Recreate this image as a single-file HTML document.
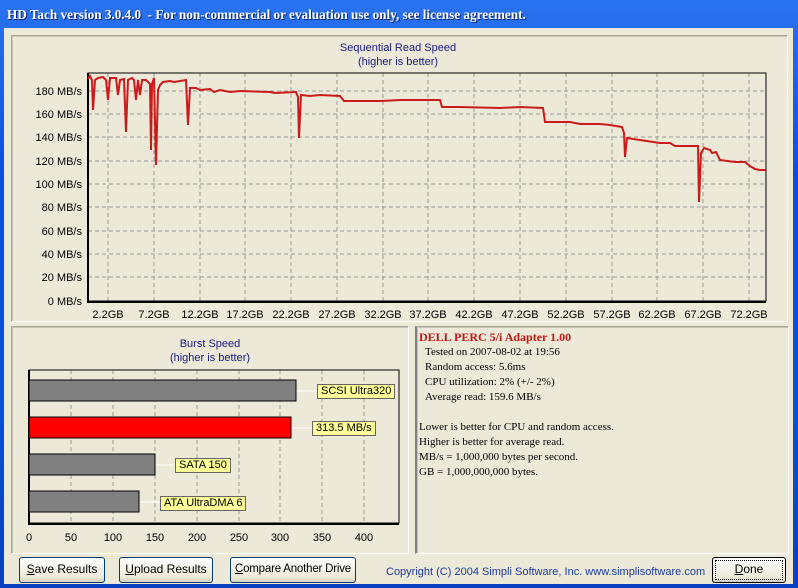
<!DOCTYPE html>
<html><head><style>
html,body{margin:0;width:798px;height:588px;overflow:hidden}
body{background:#0a3fd0;font-family:"Liberation Sans",sans-serif;position:relative}
.win{position:absolute;left:0;top:0;width:798px;height:588px;background:linear-gradient(#2a73f0,#0a4ee0 30%,#0650d8 70%,#0a3fc0);}
.title{position:absolute;left:7px;top:7px;color:#fff;font:bold 13.2px "Liberation Serif",serif;text-shadow:1px 1px 0 #0a246a;white-space:nowrap}
.client{position:absolute;left:4px;top:28px;width:789px;height:556px;background:#ece9d8}
.panel{position:absolute;border:1px solid;border-color:#aca899 #fff #fff #aca899;box-shadow:inset 1px 1px 0 #c8c4b4}
.btn{position:absolute;height:24px;border:1px solid #003c74;border-radius:3px;background:linear-gradient(#fff,#ece9d8 80%,#d6d0c0);font-size:12px;text-align:center;line-height:23px;color:#000;white-space:nowrap;overflow:hidden}
.lbl{position:absolute;background:#ffff99;border:1px solid #666;font-size:11px;line-height:13px;padding:0 3px;white-space:nowrap}
.info{position:absolute;font:11px "Liberation Serif",serif;color:#000;line-height:15px;white-space:nowrap}
</style></head><body>
<div class="win"></div>
<div class="title">HD Tach version 3.0.4.0&nbsp; - For non-commercial or evaluation use only, see license agreement.</div>
<div class="client"></div>
<div class="panel" style="left:11px;top:35px;width:775px;height:285px"></div>
<div class="panel" style="left:11px;top:326px;width:396px;height:226px"></div>
<div class="panel" style="left:415px;top:326px;width:371px;height:226px;border-left:2px solid #808080"></div>
<svg width="798" height="588" style="position:absolute;left:0;top:0" font-family="Liberation Sans, sans-serif">
<text x="398" y="51" font-size="11" fill="#1a1a80" text-anchor="middle">Sequential Read Speed</text>
<text x="398" y="65" font-size="11" fill="#1a1a80" text-anchor="middle">(higher is better)</text>
<g stroke="#999" stroke-dasharray="4,3" stroke-width="1">
<path d="M88 91H766M88 114H766M88 137H766M88 161H766M88 184H766M88 207H766M88 231H766M88 254H766M88 277H766"/>
<path d="M108 73V301M154 73V301M200 73V301M245 73V301M291 73V301M337 73V301M383 73V301M428 73V301M474 73V301M520 73V301M566 73V301M612 73V301M657 73V301M703 73V301M749 73V301"/>
</g>
<rect x="88" y="73" width="678" height="228" fill="none" stroke="#000" stroke-width="1"/>
<path d="M88 73V302H766" fill="none" stroke="#000" stroke-width="2"/>
<g font-size="11" fill="#000" text-anchor="end">
<text x="82" y="95">180 MB/s</text><text x="82" y="118">160 MB/s</text><text x="82" y="141">140 MB/s</text><text x="82" y="165">120 MB/s</text><text x="82" y="188">100 MB/s</text><text x="82" y="211">80 MB/s</text><text x="82" y="235">60 MB/s</text><text x="82" y="258">40 MB/s</text><text x="82" y="281">20 MB/s</text><text x="82" y="305">0 MB/s</text>
</g>
<g font-size="11" fill="#000" text-anchor="middle">
<text x="108" y="318">2.2GB</text><text x="154" y="318">7.2GB</text><text x="200" y="318">12.2GB</text><text x="245" y="318">17.2GB</text><text x="291" y="318">22.2GB</text><text x="337" y="318">27.2GB</text><text x="383" y="318">32.2GB</text><text x="428" y="318">37.2GB</text><text x="474" y="318">42.2GB</text><text x="520" y="318">47.2GB</text><text x="566" y="318">52.2GB</text><text x="612" y="318">57.2GB</text><text x="657" y="318">62.2GB</text><text x="703" y="318">67.2GB</text><text x="749" y="318">72.2GB</text>
</g>
<polyline fill="none" stroke="#cc1a1a" stroke-width="2" points="88,79 90,76 92,80 93,110 95,80 98,78 103,77 106,80 108,100 110,78 116,78 118,95 120,80 124,79 126,132 128,80 132,78 134,80 136,100 138,80 140,95 142,80 146,80 150,84 151,150 152,84 154,78 156,165 158,90 160,85 163,82 170,81 174,82 186,80 188,125 190,88 196,88 200,90 210,89 214,92 220,90 230,92 240,91 270,92 275,93 296,92 298,97 299,138 301,95 310,96 320,95 340,96 344,101 360,101 380,101 400,100 440,100 442,107 460,107 500,108 520,107 543,108 545,122 570,122 580,124 600,124 610,125 622,127 624,133 625,157 627,138 640,140 660,143 670,143 675,146 698,146 699,202 701,153 704,148 710,150 712,153 716,152 720,160 735,162 745,162 750,166 755,169 760,170 766,170"/>
<text x="210" y="347" font-size="11" fill="#1a1a80" text-anchor="middle">Burst Speed</text>
<text x="210" y="361" font-size="11" fill="#1a1a80" text-anchor="middle">(higher is better)</text>
<g stroke="#999" stroke-dasharray="4,3"><path d="M71 370V523M113 370V523M155 370V523M197 370V523M239 370V523M280 370V523M322 370V523M364 370V523"/></g>
<rect x="29" y="370" width="370" height="153" fill="none" stroke="#000"/>
<path d="M29 370V524H399" fill="none" stroke="#000" stroke-width="2"/>
<g stroke="#fff"><path d="M296 391H317M291 428H312M155 465H175M139 502H160"/></g>
<rect x="29" y="380" width="267" height="21" fill="#808080" stroke="#000"/>
<rect x="29" y="417" width="262" height="21" fill="#ff0000" stroke="#000"/>
<rect x="29" y="454" width="126" height="21" fill="#808080" stroke="#000"/>
<rect x="29" y="491" width="110" height="21" fill="#808080" stroke="#000"/>
<g font-size="11" fill="#000" text-anchor="middle">
<text x="29" y="541">0</text><text x="71" y="541">50</text><text x="113" y="541">100</text><text x="155" y="541">150</text><text x="197" y="541">200</text><text x="239" y="541">250</text><text x="280" y="541">300</text><text x="322" y="541">350</text><text x="364" y="541">400</text>
</g>
</svg>
<div class="lbl" style="left:317px;top:384px">SCSI Ultra320</div>
<div class="lbl" style="left:312px;top:421px">313.5 MB/s</div>
<div class="lbl" style="left:175px;top:458px">SATA 150</div>
<div class="lbl" style="left:160px;top:496px">ATA UltraDMA 6</div>
<div class="info" style="left:419px;top:330px;color:#c01818;font-weight:bold;font-size:12px">DELL PERC 5/i Adapter 1.00</div>
<div class="info" style="left:425px;top:345px">Tested on 2007-08-02 at 19:56<br>Random access: 5.6ms<br>CPU utilization: 2% (+/- 2%)<br>Average read: 159.6 MB/s</div>
<div class="info" style="left:419px;top:420px">Lower is better for CPU and random access.<br>Higher is better for average read.<br>MB/s = 1,000,000 bytes per second.<br>GB = 1,000,000,000 bytes.</div>
<div class="btn" style="left:19px;top:557px;width:84px"><u>S</u>ave Results</div>
<div class="btn" style="left:119px;top:557px;width:92px"><u>U</u>pload Results</div>
<div class="btn" style="left:230px;top:557px;width:124px;font-size:11.5px;letter-spacing:-0.2px"><u>C</u>ompare Another Drive</div>
<div style="position:absolute;left:386px;top:566px;font-size:11px;color:#1a3a9a;white-space:nowrap">Copyright (C) 2004 Simpli Software, Inc. www.simplisoftware.com</div>
<div class="btn" style="left:712px;top:557px;width:72px;border:1px solid #000;outline:1px dotted #000;outline-offset:-4px"><u>D</u>one</div>
</body></html>
